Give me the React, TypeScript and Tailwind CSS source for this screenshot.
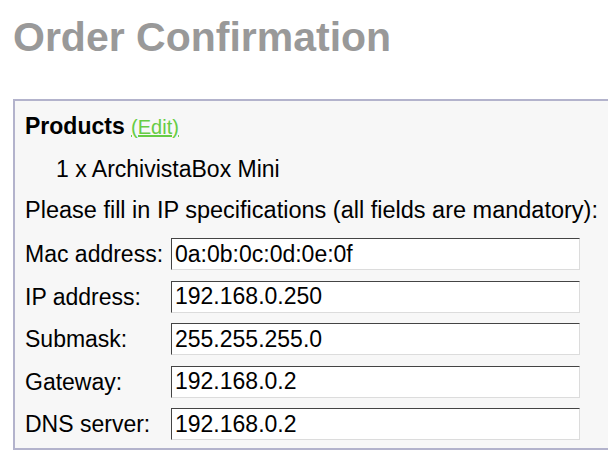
const fields = [
  { label: "Mac address:", value: "0a:0b:0c:0d:0e:0f" },
  { label: "IP address:", value: "192.168.0.250" },
  { label: "Submask:", value: "255.255.255.0" },
  { label: "Gateway:", value: "192.168.0.2" },
  { label: "DNS server:", value: "192.168.0.2" },
];

export default function App() {
  return (
    <div className="w-[608px] h-[461px] overflow-hidden bg-white font-['Liberation_Sans',Arial,sans-serif]">
      <h1 className="mt-[17px] pl-[13px] text-[41px] leading-[41px] font-bold text-[#999999]">
        Order Confirmation
      </h1>

      <div className="mt-[41px] ml-[13px] w-[620px] border-2 border-[#b3b3cc] bg-[#f7f7f7] pl-[10px] pt-[12px] pb-[8px] text-[23px] leading-[26px] text-black">
        <div className="h-[26px]">
          <span className="font-bold">Products</span>{" "}
          <a href="#" className="text-[20px] text-[#66cc44] underline">
            (Edit)
          </a>
        </div>
        <div className="mt-[17px] h-[26px] pl-[31px]">1 x ArchivistaBox Mini</div>
        <div className="mt-[15px] h-[26px] text-[23.5px]">Please fill in IP specifications (all fields are mandatory):</div>

        <div className="mt-[15px] grid grid-cols-[146px_409px] gap-y-[10.5px] items-center">
          {fields.map((f) => (
            <div key={f.label} className="contents">
              <div className="whitespace-nowrap">{f.label}</div>
              <input
                defaultValue={f.value}
                className="h-[32px] w-[409px] bg-white border border-t-[#444] border-l-[#444] border-r-[#dcdcdc] border-b-[#dcdcdc] pl-[3px] text-[23px] text-black outline-none font-['Liberation_Sans',Arial,sans-serif]"
              />
            </div>
          ))}
        </div>
      </div>
    </div>
  );
}
